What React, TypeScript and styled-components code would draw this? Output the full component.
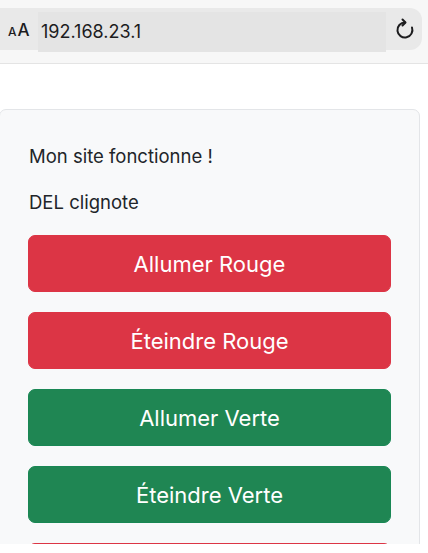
import React from "react";
import styled, { createGlobalStyle } from "styled-components";

const Global = createGlobalStyle`
  html, body { margin: 0; padding: 0; background: #ffffff; }
  body { font-family: Inter, "Noto Sans", "Liberation Sans", sans-serif; -webkit-font-smoothing: antialiased; }
  * { box-sizing: border-box; }
`;

const Viewport = styled.div`
  width: 428px;
  height: 544px;
  overflow: hidden;
  background: #ffffff;
`;

const TopBar = styled.header`
  height: 64px;
  background: #f7f7f7;
  border-bottom: 1px solid #e4e4e4;
  padding-top: 8px;
  padding-right: 6px;
`;

const UrlPill = styled.div`
  height: 42px;
  margin-left: -12px;
  background: #e9e9e9;
  border-radius: 12px;
  display: flex;
  align-items: center;
  padding-left: 20px;
  padding-right: 7px;
`;

const AaLabel = styled.span`
  display: flex;
  align-items: baseline;
  width: 30px;
  padding-top: 2px;
  color: #1c1c1e;
  font-family: Inter, "Liberation Sans", sans-serif;
  font-weight: 500;
`;

const SmallA = styled.span`
  font-size: 12px;
  margin-right: 1px;
`;

const BigA = styled.span`
  font-size: 17px;
`;

const Address = styled.div`
  flex: 1;
  align-self: stretch;
  margin-top: 4px;
  margin-bottom: -2px;
  margin-right: 8px;
  background: #e4e4e4;
  display: flex;
  align-items: center;
  padding-left: 3px;
  padding-bottom: 1px;
  font-size: 18px;
  color: #1c1c1e;
`;

const Reload = styled.button`
  border: 0;
  background: transparent;
  padding: 0;
  width: 21px;
  height: 24px;
  display: flex;
  align-items: center;
  justify-content: center;
  color: #1c1c1e;
`;

const Main = styled.main`
  padding-top: 45px;
  padding-right: 8px;
`;

const Card = styled.section`
  background: #f8f9fa;
  border: 1px solid #e3e5e8;
  border-radius: 7px;
  padding: 33px 28px 20px 28px;
  margin-left: -1px;
`;

const Text = styled.p`
  margin: 0 0 19px 1px;
  font-size: 18.5px;
  line-height: 27px;
  color: #212529;
`;

const ButtonList = styled.div`
  display: flex;
  flex-direction: column;
  gap: 20px;
  margin-top: 7px;
`;

const ActionButton = styled.button<{ $tone: "danger" | "success" }>`
  height: 57px;
  width: 100%;
  border: 1px solid ${(p) => (p.$tone === "danger" ? "#dc3545" : "#198754")};
  background: ${(p) => (p.$tone === "danger" ? "#dc3545" : "#1f8653")};
  color: #ffffff;
  border-radius: 7px;
  font-family: Inter, "Noto Sans", "Liberation Sans", sans-serif;
  font-size: 22px;
  font-weight: 400;
  padding: 0 16px;
`;

const ReloadIcon = () => (
  <svg width="20" height="22" viewBox="0 0 20 22" fill="none" stroke="#1c1c1e" strokeWidth="2" strokeLinecap="round" strokeLinejoin="round">
    <path d="M10 4.5 A7.5 7.5 0 1 0 17 9.5" />
    <path d="M7.5 1.5 L10.5 4.5 L7.5 7.5" />
  </svg>
);

const buttons: { label: string; tone: "danger" | "success" }[] = [
  { label: "Allumer Rouge", tone: "danger" },
  { label: "Éteindre Rouge", tone: "danger" },
  { label: "Allumer Verte", tone: "success" },
  { label: "Éteindre Verte", tone: "success" },
  { label: "Clignoter", tone: "danger" },
];

export default function App() {
  return (
    <>
      <Global />
      <Viewport>
        <TopBar>
          <UrlPill>
            <AaLabel>
              <SmallA>A</SmallA>
              <BigA>A</BigA>
            </AaLabel>
            <Address>192.168.23.1</Address>
            <Reload aria-label="Recharger">
              <ReloadIcon />
            </Reload>
          </UrlPill>
        </TopBar>
        <Main>
          <Card>
            <Text>Mon site fonctionne !</Text>
            <Text>DEL clignote</Text>
            <ButtonList>
              {buttons.map((b) => (
                <ActionButton key={b.label} $tone={b.tone}>
                  {b.label}
                </ActionButton>
              ))}
            </ButtonList>
          </Card>
        </Main>
      </Viewport>
    </>
  );
}
